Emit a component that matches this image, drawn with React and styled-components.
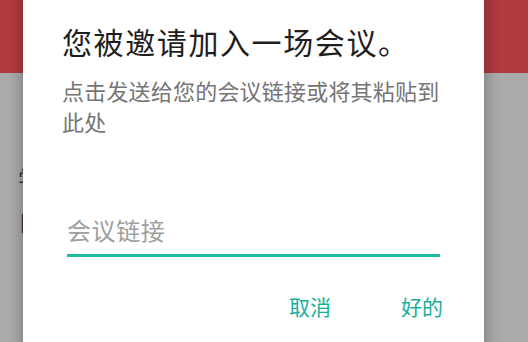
import React from "react";
import styled, { createGlobalStyle } from "styled-components";

const Global = createGlobalStyle`
  html, body { margin: 0; padding: 0; background: #aaaaaa; }
  body { font-family: "Noto Sans CJK SC", "Noto Sans", sans-serif; }
`;

const Stage = styled.div`
  position: relative;
  width: 528px;
  height: 342px;
  overflow: hidden;
  background: #aaaaaa;
`;

const AppBar = styled.div`
  height: 73px;
  background: #b03a3e;
`;

const PageBody = styled.div`
  display: flex;
  flex-direction: column;
  gap: 20px;
  padding: 92px 0 0 18px;
`;

const PageLine = styled.div`
  font-size: 22px;
  line-height: 24px;
  color: #3a3a3a;
  white-space: nowrap;
  letter-spacing: 1px;
`;

const Dialog = styled.div`
  position: absolute;
  left: 23px;
  top: -24px;
  bottom: -24px;
  width: 461px;
  box-sizing: border-box;
  background: #ffffff;
  box-shadow: 0 0 14px rgba(0, 0, 0, 0.35);
  padding: 45px 44px 0 39px;
  display: flex;
  flex-direction: column;
`;

const Title = styled.h1`
  margin: 0;
  font-size: 30px;
  font-weight: 400;
  line-height: 40px;
  letter-spacing: 1.6px;
  color: #1e1e1e;
  white-space: nowrap;
`;

const Message = styled.p`
  margin: 14px 0 0;
  font-size: 22px;
  line-height: 31px;
  letter-spacing: 0.2px;
  color: #757575;
`;

const Field = styled.input`
  margin: 78px 0 0 5px;
  padding: 0 0 9px;
  border: none;
  border-bottom: 3px solid #1cbba0;
  outline: none;
  background: transparent;
  font-family: inherit;
  font-size: 24px;
  line-height: 30px;
  letter-spacing: 0.6px;
  color: #212121;
  &::placeholder { color: #9e9e9e; }
`;

const Actions = styled.div`
  display: flex;
  justify-content: flex-end;
  gap: 70px;
  margin-top: 35px;
  margin-right: -3px;
`;

const ActionButton = styled.button`
  border: none;
  background: transparent;
  padding: 0;
  font-family: inherit;
  font-size: 21px;
  line-height: 28px;
  color: #1aaf98;
  cursor: pointer;
`;

export default function App() {
  return (
    <>
      <Global />
      <Stage>
        <AppBar />
        <PageBody>
          <PageLine>学习进度与课堂安排　　　　　　　　　　　　　　　　]</PageLine>
          <PageLine>日程提醒　　　　　　　　　　　　　　　　　　　　　X</PageLine>
        </PageBody>
        <Dialog>
          <Title>您被邀请加入一场会议。</Title>
          <Message>点击发送给您的会议链接或将其粘贴到此处</Message>
          <Field placeholder="会议链接" />
          <Actions>
            <ActionButton>取消</ActionButton>
            <ActionButton>好的</ActionButton>
          </Actions>
        </Dialog>
      </Stage>
    </>
  );
}
